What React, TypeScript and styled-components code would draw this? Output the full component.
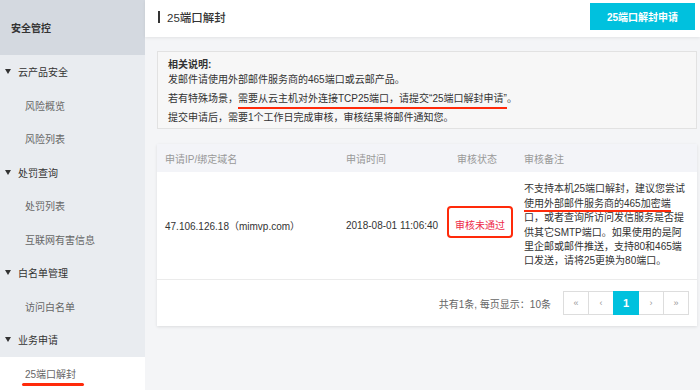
import React from "react";
import styled, { createGlobalStyle } from "styled-components";

const GlobalStyle = createGlobalStyle`
  html, body {
    margin: 0;
    padding: 0;
  }
  body {
    font-family: "Liberation Sans", "Noto Sans CJK SC", sans-serif;
    font-size: 10px;
    color: #333;
    background: #f4f5f7;
  }
`;

const Layout = styled.div`
  display: flex;
  width: 700px;
  height: 390px;
  overflow: hidden;
`;

const Sidebar = styled.aside`
  width: 145px;
  flex-shrink: 0;
  background: #e9ecf0;
  display: flex;
  flex-direction: column;
`;

const SideTitle = styled.div`
  height: 55px;
  background: #d4d9e0;
  display: flex;
  align-items: center;
  padding-left: 11px;
  font-weight: bold;
  color: #333;
`;

const SideItem = styled.div<{ $group?: boolean; $active?: boolean }>`
  height: 33.5px;
  flex-shrink: 0;
  display: flex;
  align-items: center;
  padding-left: ${(p) => (p.$group ? "5px" : "25px")};
  color: ${(p) => (p.$group ? "#333" : "#666")};
  background: ${(p) => (p.$active ? "#fff" : "transparent")};
`;

const Caret = styled.span`
  width: 0;
  height: 0;
  border-left: 3.5px solid transparent;
  border-right: 3.5px solid transparent;
  border-top: 5px solid #333;
  margin-right: 7px;
`;

const Marked = styled.span`
  position: relative;
  &::after {
    content: "";
    position: absolute;
    left: -3px;
    right: -8px;
    bottom: -5px;
    height: 3px;
    border-radius: 2px;
    background: #ff2a0a;
  }
`;

const Main = styled.main`
  flex: 1;
  display: flex;
  flex-direction: column;
  min-width: 0;
`;

const Header = styled.header`
  height: 37px;
  flex-shrink: 0;
  background: #fff;
  display: flex;
  justify-content: space-between;
  align-items: flex-start;
  padding: 3px 5px 0 13px;
  box-shadow: 0 1px 3px rgba(0, 0, 0, 0.08);
  box-sizing: border-box;
`;

const Title = styled.h1`
  margin: 0;
  height: 27px;
  display: flex;
  align-items: center;
  gap: 7px;
  font-size: 11.5px;
  font-weight: 500;
  color: #333;
  &::before {
    content: "";
    width: 2px;
    height: 12px;
    background: #333;
  }
`;

const PrimaryButton = styled.button`
  width: 105px;
  height: 27px;
  border: none;
  background: #00c1de;
  color: #fff;
  font-family: inherit;
  font-size: 10px;
  font-weight: bold;
  padding: 0;
`;

const Content = styled.div`
  padding: 14px 3px 0 12px;
  display: flex;
  flex-direction: column;
  gap: 15px;
`;

const InfoBox = styled.div`
  border: 1px solid #e2e2e2;
  background: #f7f7f7;
  padding: 5px 10px 3px;
  line-height: 15px;
  color: #333;
`;

const InfoLine = styled.div<{ $gap?: boolean; $bold?: boolean }>`
  margin-top: ${(p) => (p.$gap ? "4px" : "0")};
  font-weight: ${(p) => (p.$bold ? "bold" : "normal")};
`;

const RedLine = styled.span<{ $offset: number }>`
  border-bottom: 2px solid #ff2a0a;
  padding-bottom: ${(p) => p.$offset}px;
`;

const Card = styled.section`
  background: #fff;
  box-shadow: 0 1px 3px rgba(0, 0, 0, 0.1);
`;

const Row = styled.div<{ $head?: boolean }>`
  display: grid;
  grid-template-columns: 181px 111px 67px 1fr;
  align-items: center;
  height: ${(p) => (p.$head ? "28px" : "107px")};
  background: ${(p) => (p.$head ? "#f3f4f8" : "#fff")};
  color: ${(p) => (p.$head ? "#999" : "#333")};
  border-bottom: ${(p) => (p.$head ? "none" : "1px solid #ebebeb")};
`;

const Cell = styled.div`
  padding: 0 8px;
  white-space: nowrap;
`;

const StatusCell = styled.div`
  display: flex;
`;

const StatusMark = styled.span`
  width: 66px;
  height: 32px;
  box-sizing: border-box;
  margin-left: -2px;
  margin-bottom: 7px;
  border: 2px solid #ff2a0a;
  border-radius: 4px;
  display: flex;
  align-items: center;
  justify-content: center;
  padding-top: 5px;
  color: #ee2b4a;
`;

const Remark = styled.div`
  padding: 0 8px;
  line-height: 14.4px;
  white-space: nowrap;
`;

const Footer = styled.div`
  height: 46px;
  display: flex;
  justify-content: flex-end;
  align-items: center;
  gap: 13px;
  padding-right: 8px;
  color: #666;
`;

const Pager = styled.div`
  display: flex;
`;

const PageButton = styled.span<{ $active?: boolean }>`
  width: 26px;
  height: 24px;
  box-sizing: border-box;
  margin-left: -1px;
  display: flex;
  align-items: center;
  justify-content: center;
  border: 1px solid ${(p) => (p.$active ? "#00c1de" : "#ddd")};
  background: ${(p) => (p.$active ? "#00c1de" : "#fff")};
  color: ${(p) => (p.$active ? "#fff" : "#999")};
  font-size: ${(p) => (p.$active ? "11px" : "9px")};
  font-weight: ${(p) => (p.$active ? "bold" : "normal")};
  position: relative;
  z-index: ${(p) => (p.$active ? 1 : 0)};
`;

const menu = [
  { label: "云产品安全", group: true },
  { label: "风险概览" },
  { label: "风险列表" },
  { label: "处罚查询", group: true },
  { label: "处罚列表" },
  { label: "互联网有害信息" },
  { label: "白名单管理", group: true },
  { label: "访问白名单" },
  { label: "业务申请", group: true },
];

export default function App() {
  return (
    <Layout>
      <GlobalStyle />
      <Sidebar>
        <SideTitle>安全管控</SideTitle>
        {menu.map((item) => (
          <SideItem key={item.label} $group={item.group}>
            {item.group && <Caret />}
            {item.label}
          </SideItem>
        ))}
        <SideItem $active>
          <Marked>25端口解封</Marked>
        </SideItem>
      </Sidebar>

      <Main>
        <Header>
          <Title>25端口解封</Title>
          <PrimaryButton>25端口解封申请</PrimaryButton>
        </Header>

        <Content>
          <InfoBox>
            <InfoLine $bold>相关说明:</InfoLine>
            <InfoLine>发邮件请使用外部邮件服务商的465端口或云邮产品。</InfoLine>
            <InfoLine $gap>
              若有特殊场景，
              <RedLine $offset={3}>
                需要从云主机对外连接TCP25端口，请提交“25端口解封申请”
              </RedLine>
              。
            </InfoLine>
            <InfoLine $gap>
              提交申请后，需要1个工作日完成审核，审核结果将邮件通知您。
            </InfoLine>
          </InfoBox>

          <Card>
            <Row $head>
              <Cell>申请IP/绑定域名</Cell>
              <Cell>申请时间</Cell>
              <Cell>审核状态</Cell>
              <Cell>审核备注</Cell>
            </Row>
            <Row>
              <Cell>47.106.126.18（mimvp.com）</Cell>
              <Cell>2018-08-01 11:06:40</Cell>
              <StatusCell>
                <StatusMark>审核未通过</StatusMark>
              </StatusCell>
              <Remark>
                不支持本机25端口解封，建议您尝试
                <br />
                <RedLine $offset={1}>使用外部邮件服务商的465加密端</RedLine>
                <br />
                口，或者查询所访问发信服务是否提
                <br />
                供其它SMTP端口。如果使用的是阿
                <br />
                里企邮或邮件推送，支持80和465端
                <br />
                口发送，请将25更换为80端口。
              </Remark>
            </Row>
            <Footer>
              <span>共有1条, 每页显示：10条</span>
              <Pager>
                <PageButton>«</PageButton>
                <PageButton>‹</PageButton>
                <PageButton $active>1</PageButton>
                <PageButton>›</PageButton>
                <PageButton>»</PageButton>
              </Pager>
            </Footer>
          </Card>
        </Content>
      </Main>
    </Layout>
  );
}
